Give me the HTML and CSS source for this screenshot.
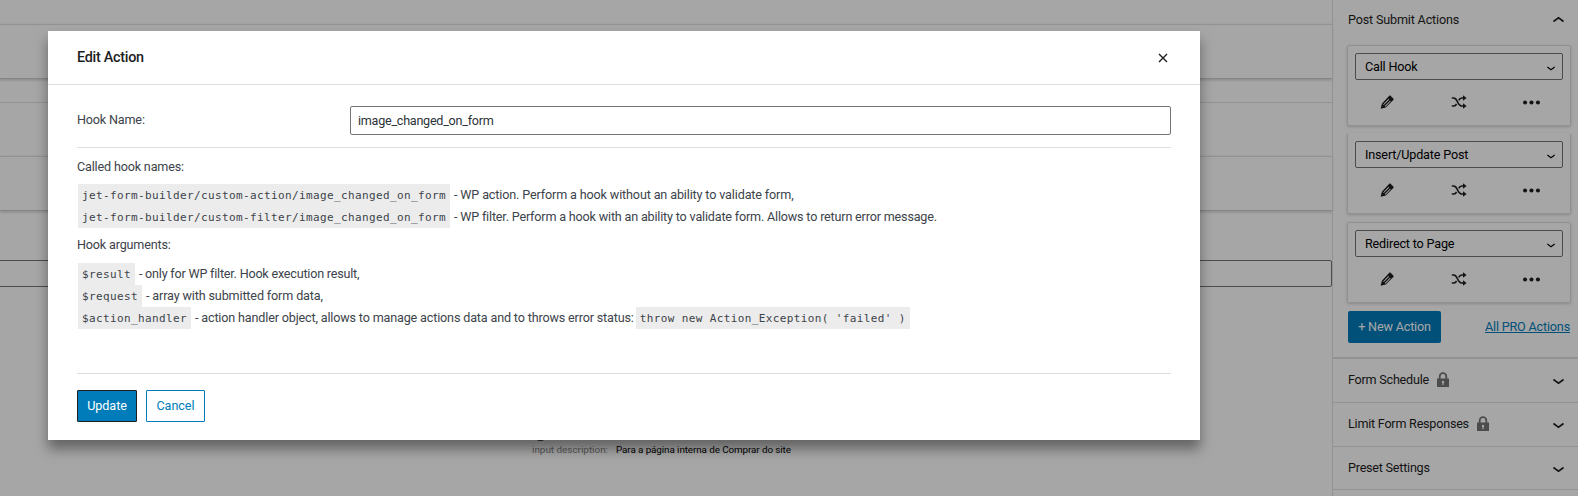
FILE: index.html
```html
<!DOCTYPE html>
<html lang="en">
<head>
<meta charset="utf-8">
<title>Edit Action</title>
<link rel="stylesheet" href="styles.css">
</head>
<body>
<svg class="defs" width="0" height="0">
  <symbol id="pencil" viewBox="0 0 20 20"><path fill-rule="evenodd" d="M14.500 2.300l3.400 3.400c.6.6.6 1.300 0 1.900l-9.400 9.200-6.500 1.700 1.600-6.400 9.200-9.800c.6-.6 1.200-.6 1.700 0zM11.700 6.200l-6.500 6.900.8.800 6.600-6.800zM13.800 8.300l-6.600 6.800.8.800 6.700-6.700z"/></symbol>
  <symbol id="shuffle" viewBox="0 0 20 20"><path fill="none" stroke="currentColor" stroke-width="2" d="M1 5h2.500c5 0 4.500 10 9.500 10H16M1 15h2.500c1.800 0 2.700-1 3.500-2.500M9.700 8C10.500 6.200 11.500 5 13.500 5H16"/><path d="M15 1.700 19.500 5l-4.500 3.300zM15 11.700 19.500 15l-4.500 3.300z"/></symbol>
  <symbol id="dots" viewBox="0 0 20 20"><circle cx="2.400" cy="10" r="2.400"/><circle cx="10" cy="10" r="2.400"/><circle cx="17.600" cy="10" r="2.400"/></symbol>
  <symbol id="lock" viewBox="0 0 12 15"><path fill-rule="evenodd" d="M0 6.500h1.800V4.500a4.200 4.200 0 0 1 8.400 0v2H12V15H0zM3.600 6.500h4.800v-2a2.400 2.400 0 0 0-4.800 0zM6 8.800a1.300 1.300 0 0 0-.6 2.400V13h1.200v-1.800A1.300 1.300 0 0 0 6 8.800z"/></symbol>
  <symbol id="down" viewBox="0 0 10 6"><path fill="none" stroke="currentColor" stroke-width="1.500" d="M.4 1.200 5 4.500 9.600 1.200"/></symbol>
  <symbol id="up" viewBox="0 0 10 6"><path fill="none" stroke="currentColor" stroke-width="1.500" d="M.4 4.800 5 1.500 9.600 4.800"/></symbol>
</svg>
<div class="app">
  <main class="canvas">
    <div class="strip"></div>
    <div class="box box-one"></div>
    <div class="gap"></div>
    <div class="box box-two"></div>
    <div class="box box-three"></div>
    <div class="field"></div>
    <div class="choice"><span class="radio"></span></div>
    <div class="desc"><span class="desc-label">input description:</span><span>Para a página interna de Comprar do site</span></div>
  </main>
  <aside class="sidebar">
    <section class="actions">
      <div class="head"><span>Post Submit Actions</span><svg class="chev"><use href="#up"/></svg></div>
      <div class="card">
        <div class="select"><span>Call Hook</span><svg class="chev-s"><use href="#down"/></svg></div>
        <div class="tools"><svg><use href="#pencil"/></svg><svg><use href="#shuffle"/></svg><svg><use href="#dots"/></svg></div>
      </div>
      <div class="card card-dragged">
        <div class="select"><span>Insert/Update Post</span><svg class="chev-s"><use href="#down"/></svg></div>
        <div class="tools"><svg><use href="#pencil"/></svg><svg><use href="#shuffle"/></svg><svg><use href="#dots"/></svg></div>
      </div>
      <div class="card">
        <div class="select"><span>Redirect to Page</span><svg class="chev-s"><use href="#down"/></svg></div>
        <div class="tools"><svg><use href="#pencil"/></svg><svg><use href="#shuffle"/></svg><svg><use href="#dots"/></svg></div>
      </div>
      <div class="row"><button class="new">+ New Action</button><a class="pro">All PRO Actions</a></div>
    </section>
    <div class="panel"><span>Form Schedule</span><svg class="lock"><use href="#lock"/></svg><svg class="chev"><use href="#down"/></svg></div>
    <div class="panel"><span>Limit Form Responses</span><svg class="lock"><use href="#lock"/></svg><svg class="chev"><use href="#down"/></svg></div>
    <div class="panel panel-last"><span>Preset Settings</span><svg class="chev"><use href="#down"/></svg></div>
  </aside>
</div>
<div class="overlay">
  <div class="modal">
    <header class="modal-head"><h1>Edit Action</h1><svg class="close" viewBox="0 0 10 10"><path d="M1 1l8 8M9 1L1 9"/></svg></header>
    <div class="modal-body">
      <div class="form-row"><label for="hook">Hook Name:</label><input id="hook" value="image_changed_on_form"></div>
      <p class="title">Called hook names:</p>
      <ul class="list">
        <li class="looser"><code>jet-form-builder/custom-action/image_changed_on_form</code> - WP action. Perform a hook without an ability to validate form,</li>
        <li><code>jet-form-builder/custom-filter/image_changed_on_form</code> - WP filter. Perform a hook with an ability to validate form. Allows to return error message.</li>
      </ul>
      <p class="title title-args">Hook arguments:</p>
      <ul class="list">
        <li><code>$result</code> - only for WP filter. Hook execution result,</li>
        <li class="looser"><code>$request</code> - array with submitted form data,</li>
        <li class="looser"><code>$action_handler</code> - action handler object, allows to manage actions data and to throws error status: <code class="snippet">throw new Action_Exception( 'failed' )</code></li>
      </ul>
      <footer class="buttons"><button class="update">Update</button><button class="cancel">Cancel</button></footer>
    </div>
  </div>
</div>
</body>
</html>
```
FILE: styles.css
```css
* { box-sizing: border-box; }
body { margin: 0; width: 1578px; height: 496px; overflow: hidden; position: relative; font: 12.6px/18px Roboto, sans-serif; letter-spacing: -.17px; color: #1e1e1e; background: #fff; }
button, input { font: inherit; letter-spacing: inherit; margin: 0; }
svg { display: block; fill: currentColor; }
.defs { position: absolute; }
.app { display: flex; height: 496px; }
.canvas { width: 1332px; }
.strip { height: 24px; }
.box { border-top: 1px solid #e0e0e0; height: 54px; }
.box-one, .box-three { height: 55px; border-bottom: 1px solid #ccc; box-shadow: 0 1px 3px rgba(0,0,0,.2); }
.gap { height: 23px; }
.field { height: 27px; margin: 49px 0 0 -3px; border: 1px solid #757575; border-radius: 2px; }
.choice { height: 154px; padding: 139px 0 0 533px; }
.radio { display: block; width: 15px; height: 15px; border: 1px solid #1e1e1e; border-radius: 50%; }
.desc { display: flex; gap: 8px; padding-left: 532px; font-size: 9.9px; line-height: 18px; letter-spacing: -.1px; color: #000; }
.desc-label { color: #888; letter-spacing: 0; }
.sidebar { width: 246px; border-left: 1px solid #e0e0e0; }
.actions { height: 359px; padding: 0 7px 0 14px; border-bottom: 2px solid #e0e0e0; }
.head { height: 45px; padding: 11px 7px 0 1px; display: flex; justify-content: space-between; }
.chev { width: 11px; height: 7px; margin-top: 5px; }
.card { height: 81px; margin-bottom: 7px; padding: 7px; border: 1px solid #ddd; border-radius: 2px; box-shadow: 0 1px 3px rgba(0,0,0,.18); }
.card-dragged { border-top-color: transparent; margin-bottom: 8px; }
.select { height: 27px; border: 1px solid #757575; border-radius: 2px; padding: 0 7px 0 9px; display: flex; align-items: center; justify-content: space-between; color: #000; }
.chev-s { width: 8px; height: 5px; margin-top: 3px; }
.tools { display: grid; grid-template-columns: repeat(3, 1fr); justify-items: center; padding-top: 14px; margin: 0 -4px 0 -4px; }
.tools svg { width: 16px; height: 16px; }
.tools svg:last-child { width: 17px; height: 17px; }
.row { display: flex; justify-content: space-between; align-items: center; padding: 1px 1px 0 1px; }
.new { width: 93px; height: 32px; padding: 0; border: 0; border-radius: 2px; background: #007cba; color: #fff; }
.pro { color: #007cba; text-decoration: underline; }
.panel { display: flex; align-items: center; height: 44px; padding: 0 14px 2px 15px; border-bottom: 1px solid #e0e0e0; letter-spacing: -.23px; }
.panel-last { height: 43px; padding-bottom: 1px; }
.panel .chev { margin: 3px 0 0 auto; }
.lock { width: 12px; height: 15px; margin-left: 8px; color: #757575; }
.overlay { position: absolute; inset: 0; background: rgba(0,0,0,.35); padding: 31px 0 0 48px; }
.modal { width: 1152px; height: 409px; background: #fff; box-shadow: 0 9px 12px rgba(0,0,0,.4); }
.modal-head { height: 54px; padding: 0 32px 0 29px; border-bottom: 1px solid #ddd; display: flex; align-items: center; justify-content: space-between; }
.modal-head h1 { margin: 0; font-size: 14.4px; font-weight: 500; letter-spacing: -.28px; }
.close { width: 10px; height: 10px; margin-top: 1px; fill: none; stroke: #1e1e1e; stroke-width: 1.4; }
.modal-body { padding: 21px 29px 0; color: #3c434a; }
.form-row { height: 42px; display: flex; border-bottom: 1px solid #ddd; }
.form-row label { width: 273px; padding-top: 5px; }
.form-row input { width: 821px; height: 29px; border: 1px solid #757575; border-radius: 2px; padding: 0 7px; color: #2c3338; letter-spacing: -.26px; }
.title { margin: 10px 0 8px; }
.title-args { margin: 8px 0 9px; }
.list { margin: 0; padding: 0; list-style: none; line-height: 22px; letter-spacing: -.18px; }
.list li { height: 22px; white-space: nowrap; }
.list .looser { letter-spacing: -.14px; }
.list li:first-child:not(.looser) { letter-spacing: -.21px; }
.list li:last-child.looser { letter-spacing: -.16px; }
.list li code { font: 11px/20px "DejaVu Sans Mono", monospace; letter-spacing: .378px; background: #ececec; padding: 5px 4px 4px; margin: 0 1px; }
.list li .snippet { margin-left: -1px; }
.buttons { display: flex; gap: 9px; margin-top: 44px; padding-top: 16px; border-top: 1px solid #ddd; letter-spacing: -.05px; }
.buttons button { height: 32px; padding: 0; border: 1px solid #007cba; border-radius: 1px; }
.buttons .update { width: 60px; background: #007cba; color: #fff; border-color: #1e1e1e; }
.buttons .cancel { width: 59px; background: #fff; color: #007cba; }
```
